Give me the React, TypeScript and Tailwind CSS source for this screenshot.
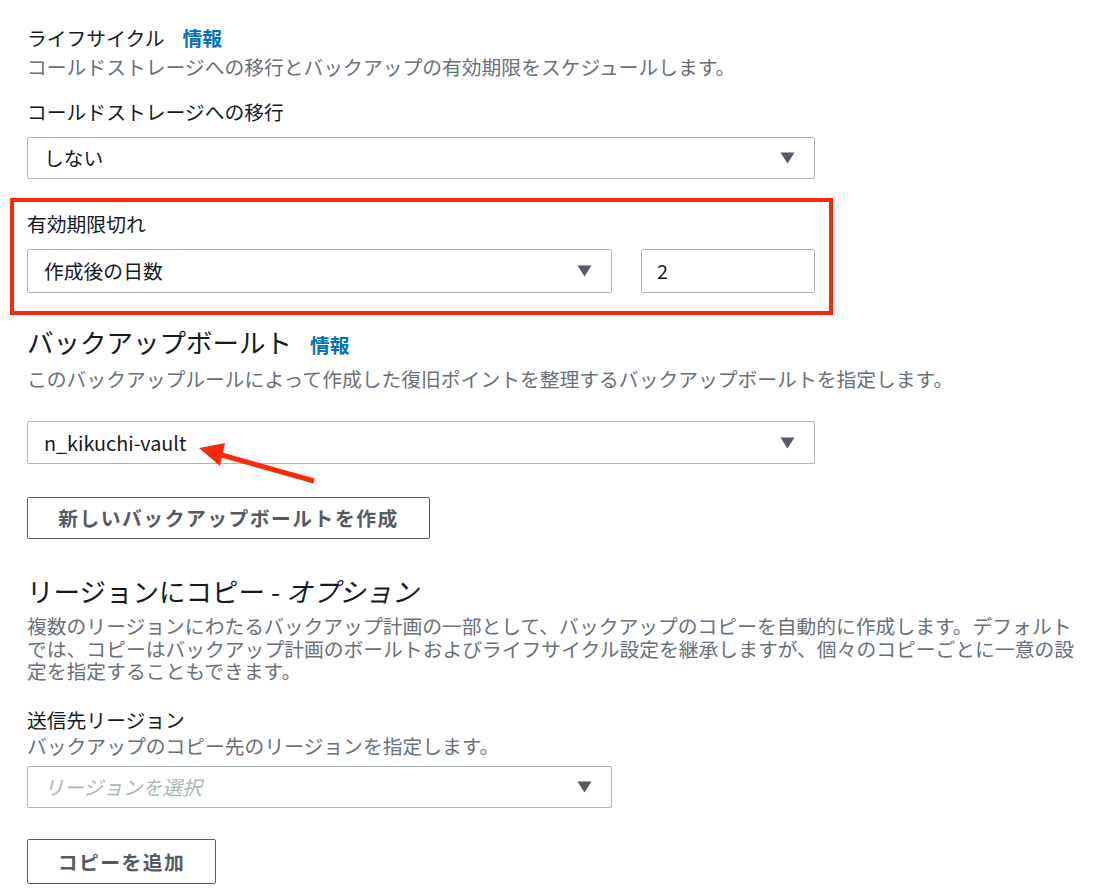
const font = { fontFamily: '"Noto Sans CJK JP", "Noto Sans", sans-serif' }

function Caret() {
  return (
    <svg width="15" height="12" viewBox="0 0 15 12" aria-hidden="true">
      <path d="M0.5 0.5 H14.5 L7.5 11.5 Z" fill="#545b64" />
    </svg>
  )
}

function SelectBox({ value, placeholder, className }: { value?: string; placeholder?: string; className: string }) {
  return (
    <div
      className={`flex items-center justify-between rounded-[2px] border border-[#aab7b8] bg-white pl-[16px] pr-[19px] ${className}`}
    >
      {value ? (
        <span className="text-[19.8px] leading-[26px] text-[#16191f]">{value}</span>
      ) : (
        <span className="text-[19.8px] leading-[26px] italic text-[#aab7b8]">{placeholder}</span>
      )}
      <Caret />
    </div>
  )
}

function OutlineButton({ label, className }: { label: string; className: string }) {
  return (
    <button
      type="button"
      className={`flex items-center justify-center rounded-[2px] border-[1.5px] border-[#545b64] bg-white text-[19.8px] leading-[26px] font-bold tracking-[1.5px] text-[#545b64] ${className}`}
    >
      {label}
    </button>
  )
}

function InfoLink() {
  return <span className="ml-[18px] text-[19.8px] font-bold text-[#0073bb]">情報</span>
}

export default function App() {
  return (
    <div className="relative min-h-[896px] w-[1110px] bg-white text-[#16191f]" style={font}>
      <div className="w-[1082px] pt-[25px] pl-[27px]">
        {/* ライフサイクル */}
        <div className="flex items-baseline text-[19.8px] leading-[26px]">
          ライフサイクル
          <InfoLink />
        </div>
        <p className="mt-[3px] text-[19.8px] leading-[26px] text-[#687078]">
          コールドストレージへの移行とバックアップの有効期限をスケジュールします。
        </p>

        <div className="mt-[19px] text-[19.8px] leading-[26px]">コールドストレージへの移行</div>
        <SelectBox value="しない" className="mt-[12px] h-[42px] w-[788px]" />

        {/* annotated block */}
        <div className="mt-[19px] -ml-[17px] w-[823px] border-[4px] border-[#f92a0c] pt-[9px] pr-[14px] pb-[18px] pl-[13px]">
          <div className="text-[19.8px] leading-[26px]">有効期限切れ</div>
          <div className="mt-[12px] flex items-center justify-between">
            <SelectBox value="作成後の日数" className="h-[44px] w-[585px]" />
            <div className="flex h-[44px] w-[174px] items-center rounded-[2px] border border-[#aab7b8] pl-[15px] text-[19.8px] leading-[26px]">
              2
            </div>
          </div>
        </div>

        {/* バックアップボールト */}
        <div className="mt-[11px] flex items-baseline text-[26.5px] leading-[32px]">
          バックアップボールト
          <InfoLink />
        </div>
        <p className="mt-[5px] text-[19.8px] leading-[26px] text-[#687078]">
          このバックアップルールによって作成した復旧ポイントを整理するバックアップボールトを指定します。
        </p>
        <SelectBox value="n_kikuchi-vault" className="mt-[29px] h-[43px] w-[788px]" />
        <OutlineButton label="新しいバックアップボールトを作成" className="mt-[33px] h-[42px] w-[403px]" />

        {/* リージョンにコピー */}
        <div className="mt-[36px] text-[26.5px] leading-[32px]">
          リージョンにコピー - <i>オプション</i>
        </div>
        <p className="mt-[8px] w-[1055px] text-[19.8px] leading-[22.5px] text-[#687078]">
          複数のリージョンにわたるバックアップ計画の一部として、バックアップのコピーを自動的に作成します。デフォルトでは、コピーはバックアップ計画のボールトおよびライフサイクル設定を継承しますが、個々のコピーごとに一意の設定を指定することもできます。
        </p>

        <div className="mt-[24.5px] text-[19.8px] leading-[26px]">送信先リージョン</div>
        <p className="text-[19.8px] leading-[26px] text-[#687078]">バックアップのコピー先のリージョンを指定します。</p>
        <SelectBox placeholder="リージョンを選択" className="mt-[7px] h-[42px] w-[585px]" />
        <OutlineButton label="コピーを追加" className="mt-[31px] h-[45px] w-[189px]" />
      </div>

      {/* annotation arrow */}
      <svg className="pointer-events-none absolute top-0 left-0" width="1110" height="896" aria-hidden="true">
        <line x1="314" y1="481" x2="218" y2="454" stroke="#f92a0c" strokeWidth="5" />
        <polygon points="199,448 225,443 220,466" fill="#f92a0c" />
      </svg>
    </div>
  )
}
